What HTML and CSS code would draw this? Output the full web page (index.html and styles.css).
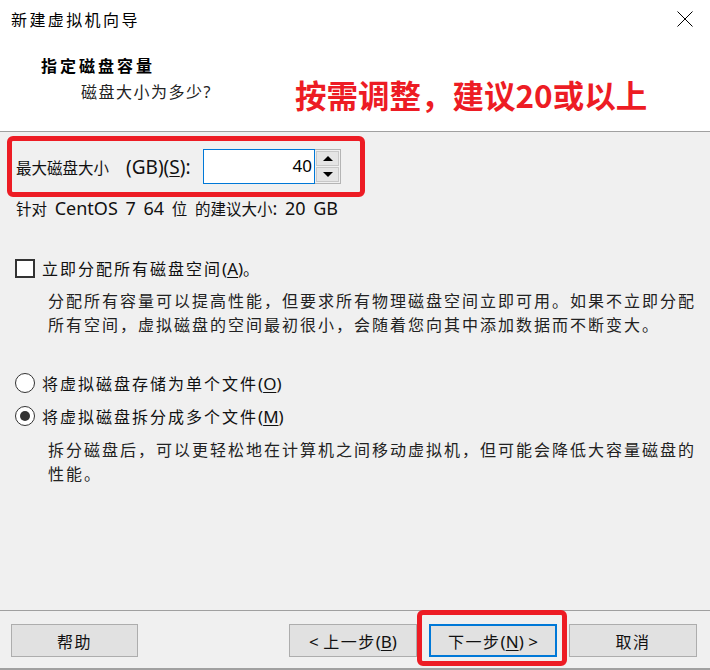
FILE: index.html
```html
<!DOCTYPE html>
<html lang="zh-CN">
<head>
    <meta charset="UTF-8">
    <title>新建虚拟机向导</title>
    <link rel="stylesheet" href="styles.css">
</head>
<body>
    <div class="dialog">
        <!-- Cabeçalho -->
        <div class="header">
            <div class="titlebar">
                <span class="title">新建虚拟机向导</span>
                <svg class="close" width="16" height="16" viewBox="0 0 16 16">
                    <path d="M0.5 0.5 L15.5 15.5 M15.5 0.5 L0.5 15.5" stroke="#000" stroke-width="1" fill="none"/>
                </svg>
            </div>
            <div class="heading">
                <div class="heading-text">
                    <div class="step-title">指定磁盘容量</div>
                    <div class="step-sub">磁盘大小为多少<span class="latin">?</span></div>
                </div>
                <div class="note">按需调整，建议20或以上</div>
            </div>
        </div>

        <!-- Conteúdo -->
        <div class="content">
            <div class="size-box">
                <label class="size-label">最大磁盘大小<span class="latin-lg gb">(GB)(<u>S</u>):</span></label>
                <div class="spin">
                    <input class="spin-input" type="text" value="40" readonly>
                    <div class="spin-btns">
                        <div class="spin-btn"><span class="tri-up"></span></div>
                        <div class="spin-btn"><span class="tri-down"></span></div>
                    </div>
                </div>
            </div>
            <div class="recommend">针对<span class="latin-lg"> CentOS 7 64 </span>位<span class="latin-lg"> </span>的建议大小<span class="latin-lg">: 20 GB</span></div>

            <div class="option option-check">
                <span class="checkbox"></span>
                <span class="opt-label">立即分配所有磁盘空间<span class="latin">(<u>A</u>)</span>。</span>
            </div>
            <p class="desc">分配所有容量可以提高性能，但要求所有物理磁盘空间立即可用。如果不立即分配<br>所有空间，虚拟磁盘的空间最初很小，会随着您向其中添加数据而不断变大。</p>

            <div class="option option-radio1">
                <span class="radio"></span>
                <span class="opt-label">将虚拟磁盘存储为单个文件<span class="latin">(<u>O</u>)</span></span>
            </div>
            <div class="option option-radio2">
                <span class="radio checked"></span>
                <span class="opt-label">将虚拟磁盘拆分成多个文件<span class="latin">(<u>M</u>)</span></span>
            </div>
            <p class="desc desc2">拆分磁盘后，可以更轻松地在计算机之间移动虚拟机，但可能会降低大容量磁盘的<br>性能。</p>
        </div>

        <!-- Rodapé -->
        <div class="footer">
            <button class="btn btn-help">帮助</button>
            <div class="spacer"></div>
            <button class="btn"><span class="latin">&lt; </span>上一步<span class="latin">(<u>B</u>)</span></button>
            <button class="btn btn-next">下一步<span class="latin">(<u>N</u>) &gt;</span><span class="mark"></span></button>
            <button class="btn">取消</button>
        </div>
    </div>
</body>
</html>
```

FILE: styles.css
```css
/* Geral */
* {
    box-sizing: border-box;
}

body {
    margin: 0;
    font-family: "Noto Sans CJK SC", "Noto Sans", sans-serif;
    color: #111;
    background-color: #f0f0f0;
}

.latin {
    font-family: "Noto Sans", "Noto Sans CJK SC", sans-serif;
    letter-spacing: 0;
}

.latin-lg {
    font-family: "Noto Sans", sans-serif;
    font-size: 18px;
    letter-spacing: 0;
}

u {
    text-underline-offset: 2px;
}

.dialog {
    width: 710px;
    height: 670px;
    display: flex;
    flex-direction: column;
    background-color: #f0f0f0;
}

/* Cabeçalho */
.header {
    height: 132px;
    background-color: #fff;
    border-bottom: 1px solid #a0a0a0;
    flex: none;
}

.titlebar {
    height: 38px;
    display: flex;
    align-items: center;
    justify-content: space-between;
    padding: 0 17px 0 11px;
}

.title {
    font-size: 16px;
    letter-spacing: 2.4px;
    color: #000;
}

.close {
    display: block;
}

.heading {
    display: flex;
}

.heading-text {
    width: 295px;
    padding: 17px 0 0 41px;
}

.step-title {
    font-size: 16px;
    font-weight: 700;
    letter-spacing: 3px;
    line-height: 20px;
    color: #000;
}

.step-sub {
    margin: 6px 0 0 40px;
    font-size: 16px;
    letter-spacing: 1.5px;
    line-height: 20px;
    color: #222;
}

.note {
    margin-top: 38px;
    font-size: 31.5px;
    font-weight: 700;
    line-height: 36px;
    color: #ed1c24;
}

/* Conteúdo */
.content {
    flex: 1;
    padding: 4px 0 0 7px;
}

.size-box {
    width: 358px;
    height: 61px;
    border: 5px solid #ed1c24;
    border-radius: 6px;
    display: flex;
    align-items: center;
    padding-left: 4px;
}

.size-label {
    width: 187px;
    font-size: 15.5px;
    white-space: nowrap;
}

.gb {
    font-size: 19px;
    margin-left: 17px;
}

.spin {
    display: flex;
}

.spin-input {
    width: 112px;
    height: 35px;
    border: 1px solid #0078d7;
    padding: 0 2px 2px 0;
    text-align: right;
    font-family: "Noto Sans", sans-serif;
    font-size: 17px;
    color: #000;
    background-color: #fff;
    outline: none;
}

.spin-btns {
    width: 26px;
    height: 35px;
    display: flex;
    flex-direction: column;
    border: 1px solid #b4b4b4;
    border-left: none;
    padding: 1px;
    gap: 1px;
    background-color: #f0f0f0;
}

.spin-btn {
    flex: 1;
    background-color: #e5e5e5;
    border: 1px solid #c8c8c8;
    display: flex;
    align-items: center;
    justify-content: center;
}

.tri-up {
    border-left: 5px solid transparent;
    border-right: 5px solid transparent;
    border-bottom: 5px solid #000;
}

.tri-down {
    border-left: 5px solid transparent;
    border-right: 5px solid transparent;
    border-top: 5px solid #000;
}

.recommend {
    margin-top: 1px;
    padding-left: 9px;
    line-height: 20px;
    font-size: 15.5px;
    word-spacing: 3px;
    white-space: nowrap;
}

/* Opções */
.option {
    display: flex;
    align-items: center;
    height: 20px;
    padding-left: 8px;
    gap: 7px;
}

.option-check {
    margin-top: 40px;
}

.option-radio1 {
    margin-top: 37px;
}

.option-radio2 {
    margin-top: 13px;
}

.opt-label {
    font-size: 16px;
    letter-spacing: 2px;
}

.opt-label .latin {
    font-size: 17px;
}

.checkbox {
    width: 20px;
    height: 19px;
    border: 2px solid #333;
    background-color: #fff;
}

.radio {
    width: 20px;
    height: 20px;
    border: 1.5px solid #333;
    border-radius: 50%;
    background-color: #fff;
    display: flex;
    align-items: center;
    justify-content: center;
}

.radio.checked::after {
    content: "";
    width: 10px;
    height: 10px;
    border-radius: 50%;
    background-color: #333;
}

.desc {
    margin: 10px 0 0 41px;
    font-size: 16px;
    letter-spacing: 2px;
    line-height: 24px;
    color: #222;
    white-space: nowrap;
}

.desc2 {
    margin-top: 11px;
}

/* Rodapé */
.footer {
    flex: none;
    height: 60px;
    border-top: 1px solid #a0a0a0;
    border-bottom: 2px solid #a0a0a0;
    display: flex;
    align-items: flex-start;
    gap: 12px;
    padding: 13px 13px 0 11px;
}

.spacer {
    flex: 1;
}

.btn {
    width: 128px;
    height: 33px;
    border: 1px solid #adadad;
    background-color: #e1e1e1;
    font-family: "Noto Sans CJK SC", "Noto Sans", sans-serif;
    font-size: 16px;
    letter-spacing: 1.5px;
    color: #111;
    padding: 0;
}

.btn .latin {
    font-size: 17px;
}

.btn-help {
    width: 127px;
}

.btn-next {
    position: relative;
    border: 2px solid #0078d7;
}

/* Marcação vermelha sobre o botão */
.mark {
    position: absolute;
    left: -14px;
    top: -16px;
    width: 150px;
    height: 56px;
    border: 5px solid #ed1c24;
    border-radius: 6px;
}
```
